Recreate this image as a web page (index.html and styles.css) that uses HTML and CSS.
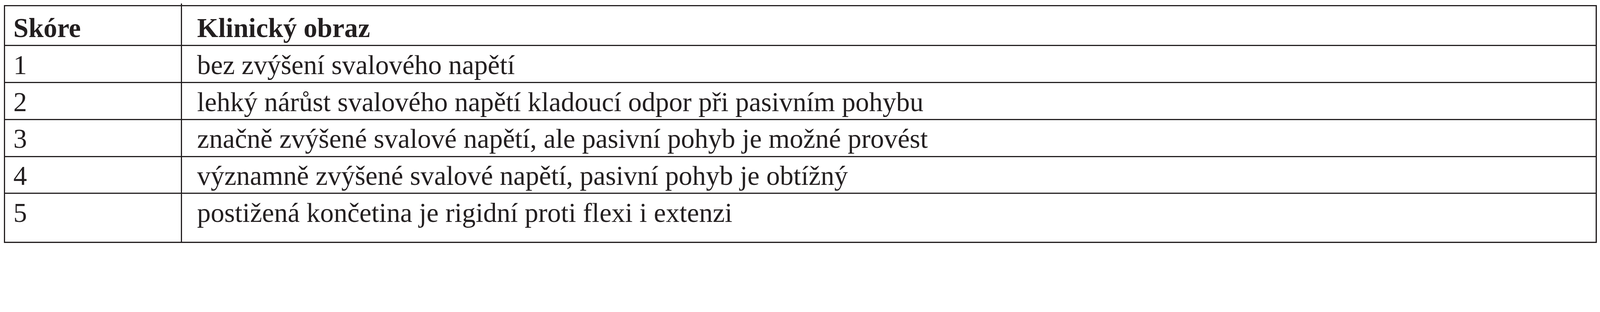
FILE: index.html
```html
<!DOCTYPE html>
<html lang="cs">
<head>
<meta charset="utf-8">
<title>Skóre – Klinický obraz</title>
<link rel="stylesheet" href="styles.css">
</head>
<body>
<table class="score-table">
  <colgroup>
    <col class="col-score">
    <col class="col-desc">
  </colgroup>
  <thead>
    <tr class="head-row">
      <th class="cell-score">Skóre</th>
      <th class="cell-desc">Klinický obraz</th>
    </tr>
  </thead>
  <tbody>
    <tr class="body-row">
      <td class="cell-score">1</td>
      <td class="cell-desc">bez zvýšení svalového napětí</td>
    </tr>
    <tr class="body-row">
      <td class="cell-score">2</td>
      <td class="cell-desc">lehký nárůst svalového napětí kladoucí odpor při pasivním pohybu</td>
    </tr>
    <tr class="body-row">
      <td class="cell-score">3</td>
      <td class="cell-desc">značně zvýšené svalové napětí, ale pasivní pohyb je možné provést</td>
    </tr>
    <tr class="body-row">
      <td class="cell-score">4</td>
      <td class="cell-desc">významně zvýšené svalové napětí, pasivní pohyb je obtížný</td>
    </tr>
    <tr class="body-row last-row">
      <td class="cell-score">5</td>
      <td class="cell-desc">postižená končetina je rigidní proti flexi i extenzi</td>
    </tr>
  </tbody>
</table>
</body>
</html>
```

FILE: styles.css
```css
html, body {
  margin: 0;
  padding: 0;
  background: #ffffff;
}

body {
  padding: 12.8px 0 0 9.6px;
  font-family: "Liberation Serif", "Times New Roman", serif;
  color: #231f20;
}

.score-table {
  box-sizing: border-box;
  width: 4078.4px;
  table-layout: fixed;
  border-collapse: separate;
  border-spacing: 0;
  border: 3.2px solid #231f20;
  box-shadow: inset -0.8px -0.8px 0 #cfcfcf;
  font-size: 69.6px;
  line-height: 80px;
}

.col-score {
  width: 453.6px;
}

.score-table th,
.score-table td {
  box-sizing: border-box;
  vertical-align: top;
  text-align: left;
  white-space: nowrap;
  padding: 8.6px 0 0 0;
  border-bottom: 3.2px solid #231f20;
}

.score-table th {
  font-weight: bold;
  padding-top: 16.6px;
}

.score-table .cell-score {
  padding-left: 21.6px;
  border-right: 3.2px solid #231f20;
}

.score-table .cell-desc {
  padding-left: 38.4px;
}

.head-row th {
  height: 102.4px;
}

.body-row td {
  height: 94.8px;
}

.last-row td {
  height: 122.4px;
  border-bottom: none;
}

.head-row .cell-score {
  position: relative;
}

.head-row .cell-score::after {
  content: "";
  position: absolute;
  right: -3.2px;
  top: -6.4px;
  width: 3.2px;
  height: 3.2px;
  background: #231f20;
}
```
